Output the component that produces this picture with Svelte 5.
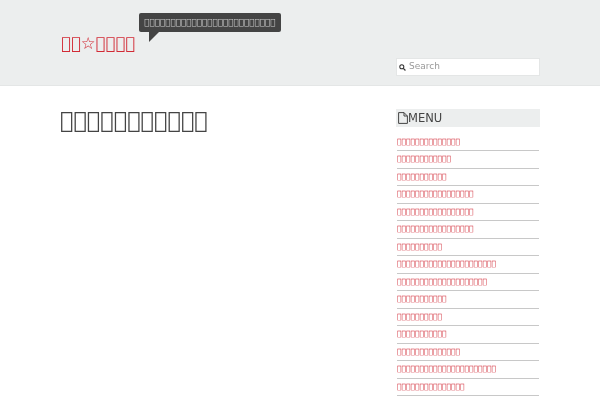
<script>
  const box = (n) => '\uE000'.repeat(n);
  const items = [14, 12, 11, 17, 17, 17, 10, 22, 20, 11, 10, 11, 14, 22, 15];
</script>

<div class="page">
  <header class="masthead">
    <div class="inner">
      <div class="brand">
        <a class="logo" href="#top">{box(2)}☆{box(4)}</a>
        <div class="bubble">{box(25)}</div>
      </div>
      <div class="search">
        <svg viewBox="0 0 10 10" width="7" height="7" aria-hidden="true">
          <circle cx="4" cy="4" r="2.9" fill="none" stroke="#333" stroke-width="1.5" />
          <path d="M6.2 6.2 9.2 9.2" stroke="#333" stroke-width="1.8" />
        </svg>
        <span>Search</span>
      </div>
    </div>
  </header>
  <div class="body">
    <main>
      <h1>{box(11)}</h1>
    </main>
    <aside>
      <h2>
        <svg viewBox="0 0 10 12" width="10" height="12" aria-hidden="true">
          <path d="M.6.6H6L9.4 4V11.4H.6ZM6 .6V4H9.4" fill="none" stroke="#444" stroke-width="1" />
        </svg>MENU
      </h2>
      <ul>
        {#each items as n}
          <li><a href="#top">{box(n)}</a></li>
        {/each}
      </ul>
    </aside>
  </div>
</div>

<style>
  :global(body) {
    margin: 0;
    background: #fff;
    font-family: "DejaVu Sans", sans-serif;
    color: #333;
  }
  .page {
    height: 400px;
    overflow: hidden;
    will-change: transform;
  }
  .masthead {
    background: #eceeee;
    border-bottom: 1px solid #e4e6e6;
    height: 85px;
  }
  .inner {
    width: 480px;
    margin: 0 auto;
    display: flex;
    justify-content: space-between;
  }
  .brand {
    display: flex;
    align-items: flex-start;
    padding-top: 13px;
    gap: 4px;
  }
  .logo {
    color: #d22a35;
    font-size: 16.5px;
    text-decoration: none;
    line-height: 20px;
    margin-top: 21px;
    margin-left: 1px;
    white-space: nowrap;
  }
  .bubble {
    position: relative;
    background: #444;
    color: #ccc;
    font-size: 8.75px;
    line-height: 19px;
    height: 19px;
    padding: 0 6px 0 5px;
    border-radius: 2px;
    white-space: nowrap;
  }
  .bubble::after {
    content: "";
    position: absolute;
    left: 10px;
    top: 19px;
    border-top: 10px solid #444;
    border-left: 0 solid transparent;
    border-right: 10px solid transparent;
  }
  .search {
    align-self: flex-start;
    margin-top: 58px;
    width: 142px;
    height: 16px;
    background: #fff;
    border: 1px solid #e4e6e6;
    display: flex;
    align-items: center;
    gap: 3px;
    font-size: 9px;
    line-height: 14px;
    color: #999;
  }
  .search span {
    margin-top: -2px;
  }
  .search svg {
    margin-left: 2px;
  }
  .body {
    width: 480px;
    margin: 0 auto;
    display: flex;
    justify-content: space-between;
  }
  h1 {
    margin: 20px 0 0;
    font-size: 22.4px;
    line-height: 28px;
    font-weight: 400;
    color: #444;
    white-space: nowrap;
  }
  aside {
    width: 144px;
    margin-top: 23px;
  }
  h2 {
    margin: 0;
    background: #eceeee;
    height: 18px;
    line-height: 18px;
    font-size: 11.5px;
    font-weight: 400;
    color: #444;
    padding-left: 2px;
    display: flex;
    align-items: center;
  }
  ul {
    list-style: none;
    margin: 6.5px 1px 0 0;
    padding: 0;
  }
  li {
    height: 16.5px;
    line-height: 16.5px;
    border-bottom: 1px solid #c8c8c8;
    font-size: 7.5px;
    margin-left: 1px;
  }
  li a {
    color: #cf1f2b;
    text-decoration: none;
  }
</style>
